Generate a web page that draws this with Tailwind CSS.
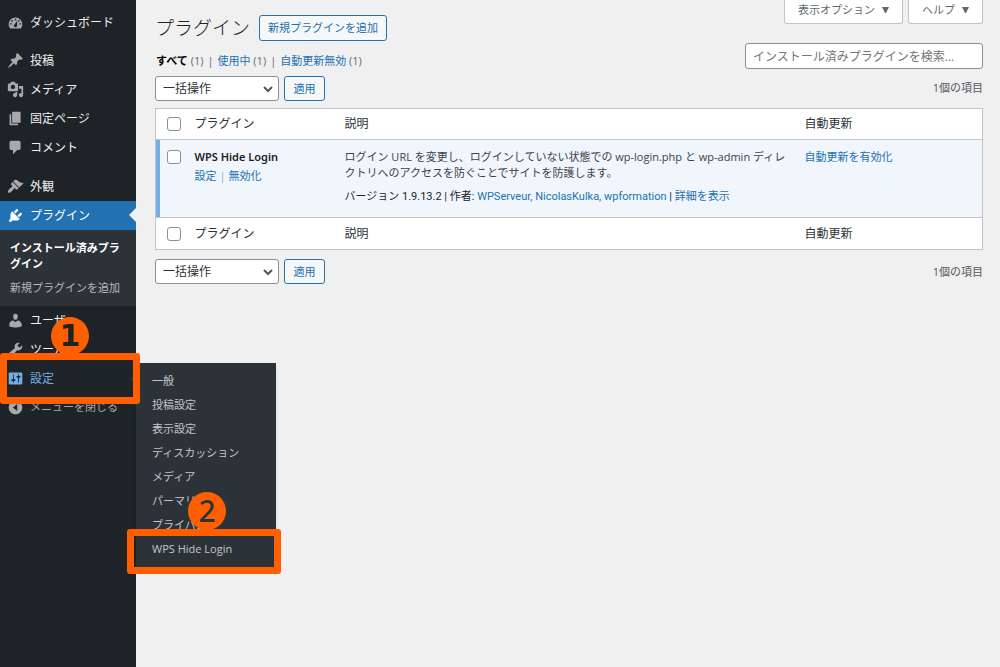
<!DOCTYPE html>
<html lang="ja">
<head>
<meta charset="utf-8">
<meta name="viewport" content="width=device-width, initial-scale=1">
<title>プラグイン</title>
<script src="https://cdn.jsdelivr.net/npm/@tailwindcss/browser@4"></script>
</head>
<body class="flex min-h-screen bg-[#f0f0f1] font-['Open_Sans','Noto_Sans_CJK_JP',sans-serif] text-[11px] leading-4 text-[#3c434a]">

<!-- Admin menu -->
<nav class="relative w-[136px] shrink-0 bg-[#1d2327] pt-2 text-xs text-[#f0f0f1]">
  <ul>
    <li><a href="#" class="flex h-[29px] items-center gap-[6px] pl-[7px]"><svg class="size-[17px] fill-[#a7aaad]" viewBox="0 0 20 20"><path fill-rule="evenodd" d="M3.760 17h12.480c1.100-1.370 1.760-3.110 1.760-5 0-4.420-3.580-8-8-8s-8 3.580-8 8c0 1.890.66 3.630 1.760 5zM10 5.500a1 1 0 110 2 1 1 0 010-2zM6 7a1 1 0 110 2 1 1 0 010-2zm8 0a1 1 0 110 2 1 1 0 010-2zM8.600 12.600L12 8v5.500c0 1.100-.9 2-2 2s-2-.9-2-2c0-.35.22-.6.6-.9zM4.500 10.500a1 1 0 110 2 1 1 0 010-2zm11 0a1 1 0 110 2 1 1 0 010-2z"/></svg>ダッシュボード</a></li>
    <li class="mt-[9px]"><a href="#" class="flex h-[29px] items-center gap-[6px] pl-[7px]"><svg class="size-[17px] fill-[#a7aaad]" viewBox="0 0 20 20"><path d="M10.440 3.020l1.820-1.820 6.360 6.350-1.830 1.820c-1.050-.68-2.480-.57-3.410.36l-.75.75c-.92.93-1.040 2.350-.35 3.410l-1.830 1.820-2.410-2.410-2.800 2.790c-.42.42-3.380 2.710-3.800 2.290s1.860-3.390 2.280-3.810l2.790-2.790L4.100 9.360l1.830-1.820c1.050.69 2.480.57 3.400-.36l.75-.75c.93-.92 1.050-2.350.36-3.410z"/></svg>投稿</a></li>
    <li><a href="#" class="flex h-[29px] items-center gap-[6px] pl-[7px]"><svg class="size-[17px] fill-[#a7aaad]" viewBox="0 0 20 20"><path fill-rule="evenodd" d="M13 11V4c0-.55-.45-1-1-1h-1.670L9 1H5L3.670 3H2c-.55 0-1 .45-1 1v7c0 .55.45 1 1 1h10c.55 0 1-.45 1-1zM7 4.500c1.380 0 2.500 1.120 2.500 2.500S8.380 9.500 7 9.500 4.500 8.380 4.500 7 5.620 4.500 7 4.500zM14 6h5v10.500c0 1.380-1.120 2.500-2.500 2.500S14 17.880 14 16.500s1.120-2.500 2.500-2.500c.17 0 .34.02.5.05V9h-3V6zm-4 8.050V13h2v3.500c0 1.380-1.120 2.500-2.500 2.500S7 17.880 7 16.500 8.120 14 9.500 14c.17 0 .34.02.5.05z"/></svg>メディア</a></li>
    <li><a href="#" class="flex h-[29px] items-center gap-[6px] pl-[7px]"><svg class="size-[17px] fill-[#a7aaad]" viewBox="0 0 20 20"><path d="M6 15V2h10v13H6zm-1 1h8v2H3V5h2v11z"/></svg>固定ページ</a></li>
    <li><a href="#" class="flex h-[29px] items-center gap-[6px] pl-[7px]"><svg class="size-[17px] fill-[#a7aaad]" viewBox="0 0 20 20"><path d="M5 2h9c1.100 0 2 .9 2 2v7c0 1.100-.9 2-2 2h-2l-5 5v-5H5c-1.100 0-2-.9-2-2V4c0-1.100.9-2 2-2z"/></svg>コメント</a></li>
    <li class="mt-[10px]"><a href="#" class="flex h-[29px] items-center gap-[6px] pl-[7px]"><svg class="size-[17px] fill-[#a7aaad]" viewBox="0 0 20 20"><path d="M14.480 11.060L7.410 3.990l1.500-1.500c.5-.56 2.300-.47 3.510.32 1.210.8 1.430 1.280 2.910 2.100 1.180.64 2.450 1.260 4.450.85zm-.71.71L6.700 4.700 4.930 6.470c-.39.39-.39 1.020 0 1.410l1.060 1.060c.39.39.39 1.030 0 1.420-.6.6-1.430 1.110-2.210 1.690-.35.26-.7.53-1.010.84C1.430 14.230.4 16.080 1.400 17.070c.99 1 2.840-.03 4.180-1.360.31-.31.58-.66.85-1.020.57-.78 1.080-1.610 1.690-2.210.39-.39 1.020-.39 1.410 0l1.060 1.060c.39.39 1.020.39 1.410 0z"/></svg>外観</a></li>
    <li>
      <a href="#" aria-current="page" class="relative flex h-[29px] items-center gap-[6px] bg-[#2271b1] pl-[7px] text-white"><svg class="size-[17px] fill-white" viewBox="0 0 20 20"><path d="M13.110 4.360L9.870 7.600 8 5.730l3.240-3.240c.35-.34 1.050-.2 1.560.32.52.51.66 1.210.31 1.550zm-8 1.770l.91-1.120 9.010 9.010-1.190.84c-.71.71-2.630 1.160-3.820 1.160H6.140L4.900 17.260c-.59.59-1.540.59-2.120 0-.59-.58-.59-1.530 0-2.120l1.240-1.240v-3.880c0-1.130.4-3.190 1.090-3.890zm7.260 3.970l3.240-3.240c.34-.35 1.040-.21 1.550.31.52.51.66 1.210.31 1.550l-3.240 3.250z"/></svg>プラグイン<svg class="absolute top-[7px] right-0 h-[14px] w-[7px] fill-[#f0f0f1]" viewBox="0 0 7 14"><path d="M7 0v14L0 7z"/></svg></a>
      <ul class="flex h-[76px] flex-col gap-2 bg-[#2c3338] pt-[10px] pr-2 pl-[10px] text-[11px] leading-4">
        <li><a href="#" class="block font-bold text-white">インストール済みプラグイン</a></li>
        <li><a href="#" class="block whitespace-nowrap text-[#b4b9be]">新規プラグインを追加</a></li>
      </ul>
    </li>
    <li><a href="#" class="flex h-[29px] items-center gap-[6px] pl-[7px]"><svg class="size-[17px] fill-[#a7aaad]" viewBox="0 0 20 20"><path d="M10 9.250c-2.270 0-2.730-3.440-2.730-3.440C7 4.020 7.820 2 9.970 2c2.160 0 2.980 2.020 2.710 3.810 0 0-.41 3.440-2.680 3.440zm0 2.570L12.720 10c2.390 0 4.520 2.330 4.520 4.530v2.490s-3.650 1.130-7.240 1.130c-3.650 0-7.240-1.130-7.240-1.130v-2.490c0-2.250 1.940-4.480 4.470-4.480z"/></svg>ユーザー</a></li>
    <li><a href="#" class="flex h-[29px] items-center gap-[6px] pl-[7px]"><svg class="size-[17px] fill-[#a7aaad]" viewBox="0 0 20 20"><path fill-rule="evenodd" d="M16.680 9.770c-1.340 1.340-3.300 1.670-4.950.99l-5.410 6.520c-.99.99-2.590.99-3.580 0s-.99-2.590 0-3.570l6.520-5.420c-.68-1.650-.35-3.610.99-4.950 1.280-1.280 3.120-1.620 4.720-1.060l-2.890 2.890 2.820 2.820 2.860-2.870c.53 1.580.18 3.390-1.080 4.650zM3.810 16.210c.4.39 1.040.39 1.430 0 .4-.4.4-1.040 0-1.430-.39-.4-1.030-.4-1.430 0-.39.39-.39 1.030 0 1.430z"/></svg>ツール</a></li>
    <li class="relative">
      <a href="#" class="flex h-[29px] items-center gap-[6px] pl-[7px] text-[#72aee6]"><svg class="size-[17px] fill-[#72aee6]" viewBox="0 0 20 20"><path fill-rule="evenodd" d="M18 16V4c0-.55-.45-1-1-1H3c-.55 0-1 .45-1 1v12c0 .55.45 1 1 1h14c.55 0 1-.45 1-1zM8 11h1c.55 0 1 .45 1 1s-.45 1-1 1H8v1.500c0 .28-.22.5-.5.5s-.5-.22-.5-.5V13H6c-.55 0-1-.45-1-1s.45-1 1-1h1V5.500c0-.28.22-.5.5-.5s.5.22.5.5V11zm5-2h-1c-.55 0-1-.45-1-1s.45-1 1-1h1V5.500c0-.28.22-.5.5-.5s.5.22.5.5V7h1c.55 0 1 .45 1 1s-.45 1-1 1h-1v5.500c0 .28-.22.5-.5.5s-.5-.22-.5-.5V9z"/></svg>設定</a>
      <svg class="absolute top-[9px] right-0 h-3 w-[6px] fill-[#2c3338]" viewBox="0 0 6 12"><path d="M6 0v12L0 6z"/></svg>
      <!-- Settings fly-out -->
      <ul class="absolute -top-px left-full z-10 w-[140px] bg-[#2c3338] py-[6px] text-[11px] leading-6 whitespace-nowrap text-[#c3c6ca] shadow-md">
        <li><a href="#" class="block px-4">一般</a></li>
        <li><a href="#" class="block px-4">投稿設定</a></li>
        <li><a href="#" class="block px-4">表示設定</a></li>
        <li><a href="#" class="block px-4">ディスカッション</a></li>
        <li><a href="#" class="block px-4">メディア</a></li>
        <li><a href="#" class="block px-4">パーマリンク</a></li>
        <li><a href="#" class="block px-4">プライバシー</a></li>
        <li><a href="#" class="block px-4">WPS Hide Login</a></li>
      </ul>
    </li>
    <li><button type="button" class="flex h-[29px] w-full items-center gap-[6px] pl-[7px] text-left text-[11px] text-[#a7aaad]"><svg class="size-[17px] fill-[#a7aaad]" viewBox="0 0 20 20"><path fill-rule="evenodd" d="M10 2c4.420 0 8 3.580 8 8s-3.580 8-8 8-8-3.580-8-8 3.580-8 8-8zm2 12V6l-5 4z"/></svg>メニューを閉じる</button></li>
  </ul>

  <!-- Step callouts -->
  <div class="absolute top-[317px] left-[51px] z-20 flex size-[38px] items-center justify-center rounded-full bg-[#ff5f00] font-['DejaVu_Sans'] text-[30px] leading-none font-bold text-[#1d2327]">1</div>
  <div class="absolute top-[353px] left-0 z-20 h-[51px] w-[140px] rounded-[3px] border-[7px] border-[#ff5f00]"></div>
  <div class="absolute top-[492px] left-[188px] z-20 flex size-[38px] items-center justify-center rounded-full bg-[#ff5f00] font-['Noto_Sans'] text-[30px] leading-none font-medium text-[#2c3338]">2</div>
  <div class="absolute top-[529px] left-[127px] z-20 h-[45px] w-[154px] rounded-[3px] border-[7px] border-[#ff5f00]"></div>
</nav>

<main class="min-w-0 flex-1 pr-[17px] pl-[19px]">
  <header class="flex h-[108px] items-start justify-between">
    <div>
      <div class="flex items-center gap-[9px] pt-[15px]">
        <h1 class="text-[19px] leading-[26px] font-light text-[#1d2327]">プラグイン</h1>
        <a href="#" class="flex h-[26px] items-center rounded-[3px] border border-[#2271b1] bg-[#f6f7f7] px-2 text-[#2271b1]">新規プラグインを追加</a>
      </div>
      <ul class="mt-3 flex gap-1 pl-px text-[#646970]">
        <li><a href="#" class="font-bold text-black">すべて</a> (1)</li><li>|</li>
        <li><a href="#" class="text-[#2271b1]">使用中</a> (1)</li><li>|</li>
        <li><a href="#" class="text-[#2271b1]">自動更新無効</a> (1)</li>
      </ul>
      <div class="mt-[7px] flex gap-[5px]">
        <div class="relative">
          <select aria-label="一括操作" class="h-[25px] w-[124px] appearance-none rounded-[3px] border border-[#8c8f94] bg-white pl-[7px] text-xs text-[#2c3338]"><option>一括操作</option></select>
          <svg class="pointer-events-none absolute top-2 right-[6px] size-[10px] fill-none stroke-[#50575e] stroke-2" viewBox="0 0 10 10"><path d="M1 3l4 4 4-4"/></svg>
        </div>
        <button type="button" class="h-[25px] w-[41px] rounded-[3px] border border-[#2271b1] bg-[#f6f7f7] text-[#2271b1]">適用</button>
      </div>
    </div>
    <div class="flex flex-col items-end">
      <div class="flex gap-[5px] text-[#646970]">
        <button type="button" class="flex h-6 items-center gap-[7px] rounded-b-[3px] border border-t-0 border-[#c3c4c7] bg-white px-[13px] pb-1">表示オプション<svg class="h-[6px] w-[7px] fill-current" viewBox="0 0 7 6"><path d="M0 0h7L4 6H3z"/></svg></button>
        <button type="button" class="flex h-6 items-center gap-[7px] rounded-b-[3px] border border-t-0 border-[#c3c4c7] bg-white px-[13px] pb-1">ヘルプ<svg class="h-[6px] w-[7px] fill-current" viewBox="0 0 7 6"><path d="M0 0h7L4 6H3z"/></svg></button>
      </div>
      <input type="search" aria-label="インストール済みプラグインを検索" placeholder="インストール済みプラグインを検索..." class="mt-[19px] h-[26px] w-[238px] rounded-[3px] border border-[#8c8f94] bg-white px-[7px] text-xs placeholder:text-[#757575]">
      <p class="mt-[11px] text-[#50575e]">1個の項目</p>
    </div>
  </header>

  <table class="w-full table-fixed border-collapse border border-[#c3c4c7] bg-white text-left">
    <colgroup><col class="w-[39px]"><col class="w-[150px]"><col><col class="w-[178px]"></colgroup>
    <thead class="text-xs text-[#2c3338]">
      <tr class="h-[31px]">
        <th class="pl-[11px]"><input type="checkbox" aria-label="すべて選択" class="block size-[14px] appearance-none rounded-[3px] border border-[#8c8f94] bg-white"></th>
        <th class="font-normal">プラグイン</th><th class="font-normal">説明</th><th class="font-normal">自動更新</th>
      </tr>
    </thead>
    <tbody>
      <tr class="h-[78px] border-y border-[#c3c4c7] bg-[#f0f6fc] align-top">
        <th class="pt-[10px] pl-[11px] shadow-[inset_4px_0_0_#72aee6]"><input type="checkbox" aria-label="WPS Hide Login を選択" class="block size-[14px] appearance-none rounded-[3px] border border-[#8c8f94] bg-white"></th>
        <td class="pt-[9px]">
          <strong class="block font-['Noto_Sans'] font-semibold text-[#1d2327]">WPS Hide Login</strong>
          <div class="mt-[3px] flex gap-[3px] text-[#a7aaad]"><a href="#" class="text-[#2271b1]">設定</a><span>|</span><a href="#" class="text-[#2271b1]">無効化</a></div>
        </td>
        <td class="pt-[9px] pr-3">
          <p>ログイン URL を変更し、ログインしていない状態での wp-login.php と wp-admin ディレクトリへのアクセスを防ぐことでサイトを防護します。</p>
          <p class="mt-2 font-[Roboto,'Noto_Sans_CJK_JP',sans-serif] whitespace-nowrap text-[#1d2327]">バージョン 1.9.13.2 | 作者: <a href="#" class="text-[#2271b1]">WPServeur, NicolasKulka, wpformation</a> | <a href="#" class="text-[#2271b1]">詳細を表示</a></p>
        </td>
        <td class="pt-[9px]"><a href="#" class="text-[#2271b1]">自動更新を有効化</a></td>
      </tr>
    </tbody>
    <tfoot class="text-xs text-[#2c3338]">
      <tr class="h-8">
        <th class="pl-[11px]"><input type="checkbox" aria-label="すべて選択" class="block size-[14px] appearance-none rounded-[3px] border border-[#8c8f94] bg-white"></th>
        <th class="font-normal">プラグイン</th><th class="font-normal">説明</th><th class="font-normal">自動更新</th>
      </tr>
    </tfoot>
  </table>

  <footer class="mt-[9px] flex items-center justify-between">
    <div class="flex gap-[5px]">
      <div class="relative">
        <select aria-label="一括操作" class="h-[25px] w-[124px] appearance-none rounded-[3px] border border-[#8c8f94] bg-white pl-[7px] text-xs text-[#2c3338]"><option>一括操作</option></select>
        <svg class="pointer-events-none absolute top-2 right-[6px] size-[10px] fill-none stroke-[#50575e] stroke-2" viewBox="0 0 10 10"><path d="M1 3l4 4 4-4"/></svg>
      </div>
      <button type="button" class="h-[25px] w-[41px] rounded-[3px] border border-[#2271b1] bg-[#f6f7f7] text-[#2271b1]">適用</button>
    </div>
    <p class="text-[#50575e]">1個の項目</p>
  </footer>
</main>
</body>
</html>
